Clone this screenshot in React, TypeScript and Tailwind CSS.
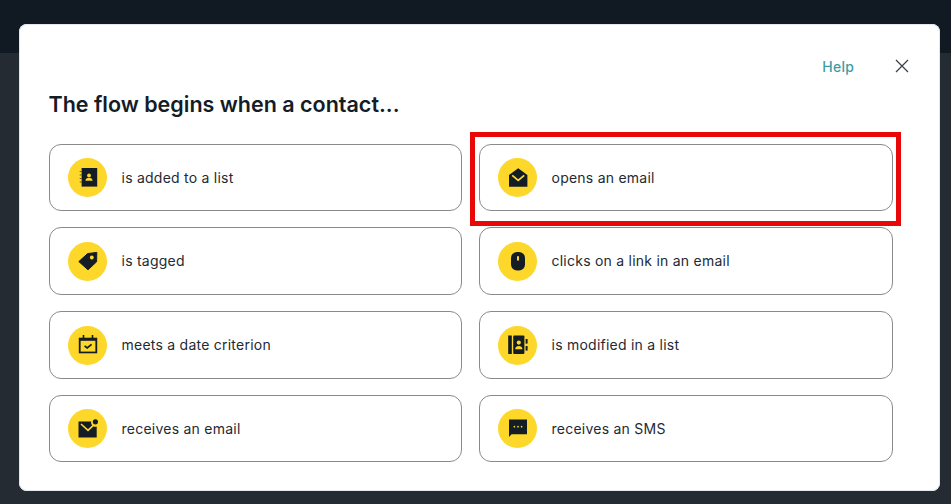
import React from "react";

const Ink = "#141c26";
const Gold = "#fdd82a";

const ListIcon = () => (
  <svg width="20" height="20" viewBox="0 0 20 20">
    <path d="M3.6 0H19.2V18.6H3.6z" fill={Ink} />
    <path d="M1.8 3.5H5M1.8 7H5M1.8 10.5H5M1.8 14H5" stroke={Ink} strokeWidth="1.2" />
    <path d="M3 2.6v1.8M3 6.1v1.8M3 9.6v1.8M3 13.1v1.8" stroke={Gold} strokeWidth="0.7" />
    <circle cx="11" cy="7.4" r="1.9" fill={Gold} />
    <path d="M7.4 12.8c0-2 1.6-3 3.6-3s3.6 1 3.6 3z" fill={Gold} />
  </svg>
);

const TagIcon = () => (
  <svg width="20" height="20" viewBox="0 0 20 20">
    <path d="M0.8 10.6 9.6 2.6 18.8 1.4 18.6 10.8 10 18.8z" fill={Ink} stroke={Ink} strokeLinejoin="round" />
    <circle cx="13.8" cy="6.5" r="1.9" fill={Gold} />
  </svg>
);

const CalendarIcon = () => (
  <svg width="20" height="20" viewBox="0 0 20 20">
    <path d="M5.5 0v3M14.5 0v3" stroke={Ink} strokeWidth="1.6" />
    <rect x="0.8" y="2.7" width="18.4" height="15.6" fill={Ink} />
    <rect x="2.6" y="5.8" width="14.8" height="10.8" fill={Gold} />
    <path d="M6.6 10.8 9.2 13 13.6 9.4" fill="none" stroke={Ink} strokeWidth="1.7" />
  </svg>
);

const MailDotIcon = () => (
  <svg width="20" height="20" viewBox="0 0 20 20">
    <path d="M0.5 2.4H13.2a4.4 4.4 0 0 0 5.5 5.2V18.6H0.5z" fill={Ink} />
    <path d="M3 5 10 11.4 15.6 6.2" fill="none" stroke={Gold} strokeWidth="1.6" />
    <circle cx="17.4" cy="2.8" r="2.6" fill={Ink} />
  </svg>
);

const OpenMailIcon = () => (
  <svg width="20" height="20" viewBox="0 0 20 20">
    <path d="M1 7 10.2 0.3 19.4 7V18.7H1z" fill={Ink} />
    <path d="M4.2 7.4 10.2 12.4 16.2 7.4" fill="none" stroke={Gold} strokeWidth="1.8" />
  </svg>
);

const MouseIcon = () => (
  <svg width="20" height="20" viewBox="0 0 20 20">
    <rect x="3" y="1" width="14" height="18.6" rx="6" fill={Ink} />
    <rect x="9" y="5" width="2" height="4.8" rx="1" fill={Gold} />
  </svg>
);

const ContactBookIcon = () => (
  <svg width="20" height="20" viewBox="0 0 20 20">
    <rect x="0.2" y="0.5" width="3.6" height="18.5" fill={Ink} />
    <rect x="5.2" y="0.5" width="11.2" height="18.5" rx="1" fill={Ink} />
    <rect x="17.6" y="4" width="2" height="4.6" fill={Ink} />
    <rect x="17.6" y="11" width="2" height="4.6" fill={Ink} />
    <circle cx="10.8" cy="7.6" r="2.1" fill={Gold} />
    <path d="M7.2 14.2c0-2.2 1.6-3.2 3.6-3.2s3.6 1 3.6 3.2z" fill={Gold} />
  </svg>
);

const ChatIcon = () => (
  <svg width="20" height="20" viewBox="0 0 20 20">
    <path d="M1 0.5H19V15.2H3.6L1 18z" fill={Ink} />
    <circle cx="6.4" cy="7.7" r="0.85" fill={Gold} />
    <circle cx="10" cy="7.7" r="0.85" fill={Gold} />
    <circle cx="13.6" cy="7.7" r="0.85" fill={Gold} />
  </svg>
);

const options = [
  { label: "is added to a list", icon: <ListIcon /> },
  { label: "opens an email", icon: <OpenMailIcon />, highlighted: true },
  { label: "is tagged", icon: <TagIcon /> },
  { label: "clicks on a link in an email", icon: <MouseIcon /> },
  { label: "meets a date criterion", icon: <CalendarIcon /> },
  { label: "is modified in a list", icon: <ContactBookIcon /> },
  { label: "receives an email", icon: <MailDotIcon /> },
  { label: "receives an SMS", icon: <ChatIcon /> },
];

export default function App() {
  return (
    <div className="relative h-[504px] w-[951px] overflow-hidden bg-[#252b33] font-['Inter',sans-serif]">
      <div className="h-[53px] bg-[#111a23]" />

      <div className="absolute left-[19px] top-[24px] h-[467px] w-[921px] rounded-lg bg-white px-[30px] ring-1 ring-inset ring-[#e4e8ee]">
        <div className="flex h-[68px] items-start justify-end pt-[33px]">
          <a className="mr-[41px] text-sm font-medium leading-5 tracking-[0.2px] text-[#3f9ca7]">Help</a>
          <svg className="mr-[1px] mt-[2px]" width="14" height="14" viewBox="0 0 14 14">
            <path d="M1 1 13 13M13 1 1 13" stroke="#3d434a" strokeWidth="1.3" />
          </svg>
        </div>

        <h2 className="-ml-[0.5px] text-[21.5px] font-semibold leading-6 text-[#141c26]">The flow begins when a contact...</h2>

        <div className="mt-[28px] grid w-[844px] grid-cols-[413px_414px] grid-rows-[67px_68px_68px_67px] gap-x-[17px] gap-y-4">
          {options.map((option) => (
            <div
              key={option.label}
              className="relative flex items-center rounded-xl border border-[#8a8a8a] bg-white pl-[18px]"
            >
              <span className="flex h-[39px] w-[39px] shrink-0 items-center justify-center rounded-full bg-[#fdd82a]">
                {option.icon}
              </span>
              <span className="ml-[14.5px] text-sm font-normal tracking-[0.24px] text-[#232a33]">{option.label}</span>
              {option.highlighted && (
                <span className="pointer-events-none absolute -bottom-[16px] -left-[10px] -right-[9px] -top-[13px] border-[5px] border-[#e90808]" />
              )}
            </div>
          ))}
        </div>
      </div>
    </div>
  );
}
